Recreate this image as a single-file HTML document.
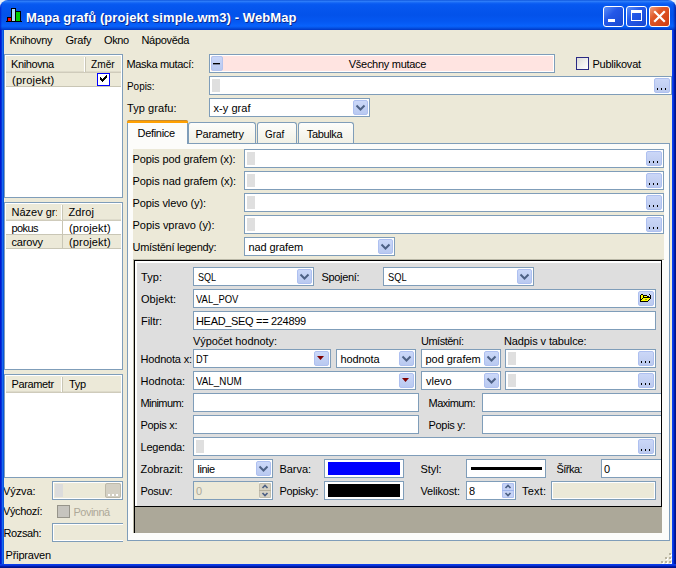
<!DOCTYPE html>
<html><head><meta charset="utf-8">
<style>
*{box-sizing:border-box;margin:0;padding:0}
html,body{width:676px;height:568px;overflow:hidden;background:#ECE9D8}
body{font-family:"Liberation Sans",sans-serif;font-size:11px;color:#000;position:relative}
.a{position:absolute}
.t{position:absolute;white-space:nowrap;line-height:13px;height:13px}
.f{position:absolute;background:#fff;border:1px solid #7F9DB9;overflow:hidden}
.ft{position:absolute;top:3px;white-space:nowrap;line-height:13px;height:13px}
.grip{position:absolute;left:2px;top:2px;width:8px;height:13px;background:#DFDFDF}
.dots{position:absolute;right:1px;top:1px;width:16px;height:15px;background:linear-gradient(#CBD7F7,#BCCAEE);border:1px solid #AEC0F0;border-radius:2px}
.dots i{position:absolute;top:9px;width:1px;height:2px;background:#000}
.dots.dis{background:#D4D0C4;border-color:#BDB9A9}
.dots.dis i{background:#fff;width:2px;top:10px}
.drop{position:absolute;right:1px;top:1px;width:15px;height:15px;background:linear-gradient(#CBD8F9,#B9C9F0);border:1px solid #AEC0F0;border-radius:2px}
.drop svg{position:absolute;left:-1px;top:-1px}
.lb{position:absolute;background:#fff;border:1px solid #7F9DB9;overflow:hidden}
.hd{position:absolute;left:1px;top:1px;right:1px;height:17px;background:#ECE9D8;border-bottom:1px solid #CFCBBB;box-shadow:inset 0 -1px 0 #DEDBCB}
.vs{position:absolute;width:1px;background:#C9C6B5}
.row{position:absolute;left:1px;right:1px;height:14px;border-bottom:1px solid #C9C6B5}
.tab{position:absolute;top:122px;height:21px;background:linear-gradient(#FDFDFB,#F1F0E6);border:1px solid #7F9DB9;border-bottom:none;border-radius:3px 3px 0 0}
</style></head><body>

<div class="a" style="left:0;top:0;width:676px;height:568px;background:#0A2CD4"></div>
<div class="a" style="left:4px;top:30px;width:668px;height:534px;background:#ECE9D8"></div>
<div class="a" style="left:0;top:0;width:676px;height:8px;background:#E8EEF8"></div>
<div class="a" style="left:0;top:0;width:676px;height:30px;background:linear-gradient(#0A50D8 0,#3080FA 4%,#1062F4 10%,#0658F0 16%,#0352EA 50%,#0558F2 72%,#0862FC 87%,#0552E4 93%,#0036C4 100%);border-radius:8px 8px 0 0"></div>
<div class="a" style="left:0;top:0;width:676px;height:30px;border-radius:8px 8px 0 0;overflow:hidden"><div class="a" style="right:0;top:0;width:3px;height:30px;background:linear-gradient(90deg,rgba(0,30,170,0),rgba(0,25,150,.85))"></div><div class="a" style="left:0;top:0;width:2px;height:30px;background:linear-gradient(90deg,rgba(0,25,200,.8),rgba(0,25,200,0))"></div></div>
<svg class="a" style="left:6px;top:7px" width="16" height="16" viewBox="0 0 16 16">
<rect x="1" y="10" width="5" height="5" fill="#000"/><rect x="2" y="11" width="3" height="3" fill="#F00"/>
<rect x="5" y="1" width="5" height="14" fill="#000"/><rect x="6" y="2" width="3" height="12" fill="#A8D8F8"/>
<rect x="9" y="4" width="6" height="11" fill="#000"/><rect x="10" y="5" width="4" height="9" fill="#0C0"/>
<rect x="0" y="14" width="16" height="1" fill="#000"/></svg>
<div id="t0" class="t" style="left:26.00px;top:10px;letter-spacing:0.088px;font-size:13px;font-weight:bold;color:#fff;line-height:15px;height:15px;text-shadow:1px 1px 0 #0A2A90">Mapa grafů (projekt simple.wm3) - WebMap</div>
<div class="a" style="left:603px;top:6px;width:21px;height:21px;border:1px solid #fff;border-radius:3px;background:linear-gradient(135deg,#5C90F8,#2458E8 40%,#1848D0)">
<div class="a" style="left:4px;top:12px;width:7px;height:3px;background:#fff"></div>
</div>
<div class="a" style="left:626px;top:6px;width:21px;height:21px;border:1px solid #fff;border-radius:3px;background:linear-gradient(135deg,#5C90F8,#2458E8 40%,#1848D0)">
<div class="a" style="left:4px;top:3px;width:11px;height:11px;border:1px solid #fff;border-top-width:3px"></div>
</div>
<div class="a" style="left:649px;top:6px;width:21px;height:21px;border:1px solid #fff;border-radius:3px;background:linear-gradient(135deg,#F0A080,#E05828 35%,#D03C10)">
<svg class="a" style="left:0;top:0" width="19" height="19"><path d="M5 5 L14 14 M14 5 L5 14" stroke="#fff" stroke-width="2.2" stroke-linecap="square"/></svg>
</div>
<div id="t1" class="t" style="left:9.50px;top:34px;letter-spacing:-0.322px;">Knihovny</div>
<div id="t2" class="t" style="left:65.50px;top:34px;letter-spacing:-0.223px;">Grafy</div>
<div id="t3" class="t" style="left:104.00px;top:34px;letter-spacing:-0.391px;">Okno</div>
<div id="t4" class="t" style="left:141.50px;top:34px;letter-spacing:-0.319px;">Nápověda</div>
<div class="lb" style="left:4px;top:54px;width:119px;height:144px">
<div class="hd"></div>
<div class="vs" style="left:80px;top:2px;height:15px"></div>
<div class="vs" style="left:79px;top:2px;height:15px;background:#fff"></div>
<div class="a" style="left:0;top:0;width:75px;height:18px;overflow:hidden">
<div id="t5" class="t" style="left:6.00px;top:3px;letter-spacing:-0.393px;">Knihovna</div>
</div>
<div class="a" style="left:0;top:0;width:116px;height:18px;overflow:hidden">
<div id="t6" class="t" style="left:86.00px;top:3px;transform:scaleX(0.9231);transform-origin:0 0;">Změr</div>
</div>
<div class="row" style="top:18px;background:#ECE9D8">
<div id="t7" class="t" style="left:6.00px;top:1px;letter-spacing:0.228px;">(projekt)</div>
</div>
</div>
<div class="a" style="left:97px;top:73px;width:13px;height:13px;border:1px solid #0000FF;background:#fff"><svg class="a" style="left:0;top:0" width="11" height="11" shape-rendering="crispEdges" fill="#000"><rect x="2" y="3" width="1" height="3"/><rect x="3" y="4" width="1" height="3"/><rect x="4" y="5" width="1" height="3"/><rect x="5" y="4" width="1" height="3"/><rect x="6" y="3" width="1" height="3"/><rect x="7" y="2" width="1" height="3"/><rect x="8" y="1" width="1" height="3"/></svg></div>
<div class="lb" style="left:4px;top:202px;width:119px;height:168px">
<div class="hd"></div>
<div class="vs" style="left:57px;top:2px;height:15px"></div>
<div class="vs" style="left:56px;top:2px;height:15px;background:#fff"></div>
<div class="a" style="left:0;top:0;width:52px;height:18px;overflow:hidden">
<div id="t8" class="t" style="left:6.50px;top:3px;">Název gr:</div>
</div>
<div class="a" style="left:0;top:0;width:116px;height:18px;overflow:hidden">
<div id="t9" class="t" style="left:63.50px;top:3px;letter-spacing:0.096px;">Zdroj</div>
</div>
<div class="row" style="top:18px;background:#fff">
<div class="vs" style="left:56px;top:0;height:13px"></div>
<div id="t10" class="t" style="left:5.50px;top:1px;letter-spacing:-0.588px;">pokus</div>
<div id="t11" class="t" style="left:63.00px;top:1px;letter-spacing:0.165px;">(projekt)</div>
</div>
<div class="row" style="top:32px;background:#ECE9D8">
<div class="vs" style="left:56px;top:0;height:13px"></div>
<div id="t12" class="t" style="left:5.50px;top:1px;letter-spacing:-0.180px;">carovy</div>
<div id="t13" class="t" style="left:63.00px;top:1px;letter-spacing:0.165px;">(projekt)</div>
</div>
</div>
<div class="lb" style="left:4px;top:374px;width:119px;height:104px">
<div class="hd"></div>
<div class="vs" style="left:57px;top:2px;height:15px"></div>
<div class="vs" style="left:56px;top:2px;height:15px;background:#fff"></div>
<div class="a" style="left:0;top:0;width:52px;height:18px;overflow:hidden">
<div id="t14" class="t" style="left:6.50px;top:3px;letter-spacing:-0.367px;">Parametr</div>
</div>
<div class="a" style="left:0;top:0;width:116px;height:18px;overflow:hidden">
<div id="t15" class="t" style="left:64.00px;top:3px;letter-spacing:-0.306px;">Typ</div>
</div>
</div>
<div id="t16" class="t" style="left:3.00px;top:485px;letter-spacing:-0.091px;">Výzva:</div>
<div class="f" style="left:52px;top:481px;width:71px;height:19px;background:#ECE9D8;box-shadow:inset 0 0 0 1px #fff"><div class="grip" style="background:#DCDCDC"></div><div class="dots dis"><i style="left:2px"></i><i style="left:6px"></i><i style="left:10px"></i></div></div>
<div id="t17" class="t" style="left:3.00px;top:505px;letter-spacing:-0.375px;">Výchozí:</div>
<div class="a" style="left:57px;top:505px;width:13px;height:13px;border:1px solid #96948A;background:#C6C4BE"></div>
<div id="t18" class="t" style="left:73.50px;top:506px;letter-spacing:-0.522px;color:#ACA899">Povinná</div>
<div id="t19" class="t" style="left:3.50px;top:527px;letter-spacing:-0.383px;">Rozsah:</div>
<div class="f" style="left:52px;top:523px;width:71px;height:19px;background:#ECE9D8;border-right:none;box-shadow:inset 0 1px 0 #fff,inset 1px 0 0 #fff,inset 0 -1px 0 #fff"></div>
<div id="t20" class="t" style="left:5.50px;top:549px;letter-spacing:-0.182px;">Připraven</div>
<svg class="a" style="left:661px;top:553px" width="12" height="12"><g fill="#fff" transform="translate(1,1)"><rect x="8" y="0" width="2" height="2"/><rect x="4" y="4" width="2" height="2"/><rect x="8" y="4" width="2" height="2"/><rect x="0" y="8" width="2" height="2"/><rect x="4" y="8" width="2" height="2"/><rect x="8" y="8" width="2" height="2"/></g><g fill="#B8B4A0"><rect x="8" y="0" width="2" height="2"/><rect x="4" y="4" width="2" height="2"/><rect x="8" y="4" width="2" height="2"/><rect x="0" y="8" width="2" height="2"/><rect x="4" y="8" width="2" height="2"/><rect x="8" y="8" width="2" height="2"/></g></svg>
<div id="t21" class="t" style="left:126.50px;top:58px;letter-spacing:-0.330px;">Maska mutací:</div>
<div class="f" style="left:209px;top:54px;width:346px;height:19px;background:#FFE4E1;box-shadow:inset 0 0 0 1px #fff"><div class="a" style="left:1px;top:1px;width:12px;height:15px;background:linear-gradient(#C9D6F8,#B9C9F0);border:1px solid #B3C3EE;border-radius:2px"><div class="a" style="left:1px;top:6px;width:7px;height:1px;background:#000;box-shadow:0 1px 0 rgba(0,0,0,.35)"></div></div><div id="t22" class="ft" style="left:138.80px;letter-spacing:-0.285px;">Všechny mutace</div></div>
<div class="a" style="left:576px;top:57px;width:13px;height:13px;border:1px solid #2A2A84;background:linear-gradient(135deg,#DCDCD8,#fff)"></div>
<div id="t23" class="t" style="left:592.50px;top:58px;letter-spacing:-0.244px;">Publikovat</div>
<div id="t24" class="t" style="left:126.50px;top:80px;transform:scaleX(0.9012);transform-origin:0 0;">Popis:</div>
<div class="f" style="left:209px;top:76px;width:463px;height:19px;"><div class="grip"></div><div class="dots"><i style="left:2px"></i><i style="left:6px"></i><i style="left:10px"></i></div></div>
<div id="t25" class="t" style="left:127.00px;top:102px;letter-spacing:0.071px;">Typ grafu:</div>
<div class="f" style="left:209px;top:98px;width:161px;height:19px;"><div id="t26" class="ft" style="left:3.50px;letter-spacing:0.055px;">x-y graf</div><div class="drop"><svg width="15" height="15" viewBox="0 0 15 15"><path d="M3.5 5.5 L7.5 9.5 L11.5 5.5" fill="none" stroke="#4D6185" stroke-width="2"/></svg></div></div>
<div class="a" style="left:127px;top:143px;width:543px;height:398px;border:1px solid #7F9DB9;background:#FCFCFA"></div>
<div class="a" style="left:133px;top:149px;width:531px;height:110px;background:#ECE9D8"></div>
<div class="tab" style="left:188px;width:68px"></div>
<div id="t27" class="t" style="left:195.50px;top:128px;letter-spacing:-0.279px;">Parametry</div>
<div class="tab" style="left:257px;width:40px"></div>
<div id="t28" class="t" style="left:265.40px;top:128px;transform:scaleX(0.8999);transform-origin:0 0;">Graf</div>
<div class="tab" style="left:298px;width:56px"></div>
<div id="t29" class="t" style="left:306.80px;top:128px;letter-spacing:-0.349px;">Tabulka</div>
<div class="a" style="left:127px;top:120px;width:61px;height:24px;background:#FCFCFA;border:1px solid #7F9DB9;border-bottom:none;border-top:none;border-radius:3px 3px 0 0"></div>
<div class="a" style="left:127px;top:120px;width:61px;height:3px;background:#FFA000;border-top:1px solid #C88C30;border-radius:2px 2px 0 0"></div>
<div id="t30" class="t" style="left:137.50px;top:127px;letter-spacing:-0.303px;">Definice</div>
<div id="t31" class="t" style="left:132.50px;top:153px;letter-spacing:-0.105px;">Popis pod grafem (x):</div>
<div class="f" style="left:244px;top:149px;width:420px;height:19px;"><div class="grip"></div><div class="dots"><i style="left:2px"></i><i style="left:6px"></i><i style="left:10px"></i></div></div>
<div id="t32" class="t" style="left:132.50px;top:175px;letter-spacing:-0.080px;">Popis nad grafem (x):</div>
<div class="f" style="left:244px;top:171px;width:420px;height:19px;"><div class="grip"></div><div class="dots"><i style="left:2px"></i><i style="left:6px"></i><i style="left:10px"></i></div></div>
<div id="t33" class="t" style="left:132.50px;top:197px;letter-spacing:-0.109px;">Popis vlevo (y):</div>
<div class="f" style="left:244px;top:193px;width:420px;height:19px;"><div class="grip"></div><div class="dots"><i style="left:2px"></i><i style="left:6px"></i><i style="left:10px"></i></div></div>
<div id="t34" class="t" style="left:132.50px;top:219px;letter-spacing:-0.029px;">Popis vpravo (y):</div>
<div class="f" style="left:244px;top:215px;width:420px;height:19px;"><div class="grip"></div><div class="dots"><i style="left:2px"></i><i style="left:6px"></i><i style="left:10px"></i></div></div>
<div id="t35" class="t" style="left:132.50px;top:241px;letter-spacing:-0.287px;">Umístění legendy:</div>
<div class="f" style="left:244px;top:237px;width:151px;height:19px;"><div id="t36" class="ft" style="left:3.50px;letter-spacing:-0.109px;">nad grafem</div><div class="drop"><svg width="15" height="15" viewBox="0 0 15 15"><path d="M3.5 5.5 L7.5 9.5 L11.5 5.5" fill="none" stroke="#4D6185" stroke-width="2"/></svg></div></div>
<div class="a" style="left:133px;top:259px;width:531px;height:274px;background:#FCFCFA;border-left:1px solid #B9B7A6;border-top:1px solid #B9B7A6"></div>
<div class="a" style="left:134px;top:260px;width:528px;height:273px;background:#ACA899;border-left:1px solid #000"></div>
<div class="a" id="ip" style="left:134px;top:260px;width:528px;height:247px;background:#DEDEDE;border:1px solid #000;overflow:hidden;box-shadow:inset 2px 2px 0 #fff">
<div id="t37" class="t" style="left:6.00px;top:10px;letter-spacing:0.090px;">Typ:</div>
<div class="f" style="left:58px;top:6px;width:121px;height:19px;"><div id="t38" class="ft" style="left:4.00px;transform:scaleX(0.8222);transform-origin:0 0;">SQL</div><div class="drop"><svg width="15" height="15" viewBox="0 0 15 15"><path d="M3.5 5.5 L7.5 9.5 L11.5 5.5" fill="none" stroke="#4D6185" stroke-width="2"/></svg></div></div>
<div id="t39" class="t" style="left:186.50px;top:10px;letter-spacing:-0.330px;">Spojení:</div>
<div class="f" style="left:248px;top:6px;width:151px;height:19px;"><div id="t40" class="ft" style="left:3.50px;transform:scaleX(0.8450);transform-origin:0 0;">SQL</div><div class="drop"><svg width="15" height="15" viewBox="0 0 15 15"><path d="M3.5 5.5 L7.5 9.5 L11.5 5.5" fill="none" stroke="#4D6185" stroke-width="2"/></svg></div></div>
<div id="t41" class="t" style="left:6.00px;top:32px;letter-spacing:0.035px;">Objekt:</div>
<div class="f" style="left:58px;top:28px;width:463px;height:19px;"><div id="t42" class="ft" style="left:2.00px;transform:scaleX(0.8602);transform-origin:0 0;">VAL_POV</div><div class="dots"><svg class="a" style="left:1px;top:2px" width="12" height="8" shape-rendering="crispEdges"><rect x="1" y="0" width="1" height="1" fill="#000"/><rect x="2" y="0" width="1" height="1" fill="#000"/><rect x="9" y="0" width="1" height="1" fill="#000"/><rect x="0" y="1" width="1" height="1" fill="#000"/><rect x="3" y="1" width="1" height="1" fill="#000"/><rect x="4" y="1" width="1" height="1" fill="#000"/><rect x="5" y="1" width="1" height="1" fill="#000"/><rect x="6" y="1" width="1" height="1" fill="#000"/><rect x="10" y="1" width="1" height="1" fill="#000"/><rect x="0" y="2" width="1" height="1" fill="#000"/><rect x="3" y="2" width="1" height="1" fill="#000"/><rect x="7" y="2" width="1" height="1" fill="#000"/><rect x="8" y="2" width="1" height="1" fill="#000"/><rect x="10" y="2" width="1" height="1" fill="#000"/><rect x="0" y="3" width="1" height="1" fill="#000"/><rect x="3" y="3" width="1" height="1" fill="#000"/><rect x="4" y="3" width="1" height="1" fill="#000"/><rect x="5" y="3" width="1" height="1" fill="#000"/><rect x="6" y="3" width="1" height="1" fill="#000"/><rect x="7" y="3" width="1" height="1" fill="#000"/><rect x="8" y="3" width="1" height="1" fill="#000"/><rect x="9" y="3" width="1" height="1" fill="#000"/><rect x="10" y="3" width="1" height="1" fill="#000"/><rect x="0" y="4" width="1" height="1" fill="#000"/><rect x="2" y="4" width="1" height="1" fill="#000"/><rect x="10" y="4" width="1" height="1" fill="#000"/><rect x="0" y="5" width="1" height="1" fill="#000"/><rect x="1" y="5" width="1" height="1" fill="#000"/><rect x="9" y="5" width="1" height="1" fill="#000"/><rect x="0" y="6" width="1" height="1" fill="#000"/><rect x="8" y="6" width="1" height="1" fill="#000"/><rect x="0" y="7" width="1" height="1" fill="#000"/><rect x="1" y="7" width="1" height="1" fill="#000"/><rect x="2" y="7" width="1" height="1" fill="#000"/><rect x="3" y="7" width="1" height="1" fill="#000"/><rect x="4" y="7" width="1" height="1" fill="#000"/><rect x="5" y="7" width="1" height="1" fill="#000"/><rect x="6" y="7" width="1" height="1" fill="#000"/><rect x="7" y="7" width="1" height="1" fill="#000"/><rect x="1" y="1" width="1" height="1" fill="#FFFF00"/><rect x="2" y="1" width="1" height="1" fill="#FFFF00"/><rect x="1" y="2" width="1" height="1" fill="#FFFF00"/><rect x="2" y="2" width="1" height="1" fill="#FFFF00"/><rect x="4" y="2" width="1" height="1" fill="#FFFF00"/><rect x="5" y="2" width="1" height="1" fill="#FFFF00"/><rect x="6" y="2" width="1" height="1" fill="#FFFF00"/><rect x="1" y="3" width="1" height="1" fill="#FFFF00"/><rect x="2" y="3" width="1" height="1" fill="#FFFF00"/><rect x="1" y="4" width="1" height="1" fill="#FFFF00"/><rect x="3" y="4" width="1" height="1" fill="#FFFF00"/><rect x="4" y="4" width="1" height="1" fill="#FFFF00"/><rect x="5" y="4" width="1" height="1" fill="#FFFF00"/><rect x="6" y="4" width="1" height="1" fill="#FFFF00"/><rect x="7" y="4" width="1" height="1" fill="#FFFF00"/><rect x="8" y="4" width="1" height="1" fill="#FFFF00"/><rect x="9" y="4" width="1" height="1" fill="#FFFF00"/><rect x="2" y="5" width="1" height="1" fill="#FFFF00"/><rect x="3" y="5" width="1" height="1" fill="#FFFF00"/><rect x="4" y="5" width="1" height="1" fill="#FFFF00"/><rect x="7" y="5" width="1" height="1" fill="#FFFF00"/><rect x="8" y="5" width="1" height="1" fill="#FFFF00"/><rect x="1" y="6" width="1" height="1" fill="#FFFF00"/><rect x="2" y="6" width="1" height="1" fill="#FFFF00"/><rect x="3" y="6" width="1" height="1" fill="#FFFF00"/><rect x="4" y="6" width="1" height="1" fill="#FFFF00"/><rect x="5" y="6" width="1" height="1" fill="#FFFF00"/><rect x="6" y="6" width="1" height="1" fill="#FFFF00"/><rect x="7" y="6" width="1" height="1" fill="#FFFF00"/><rect x="5" y="5" width="1" height="1" fill="#A0A000"/><rect x="6" y="5" width="1" height="1" fill="#A0A000"/></svg></div></div>
<div id="t43" class="t" style="left:6.00px;top:54px;letter-spacing:-0.065px;">Filtr:</div>
<div class="f" style="left:58px;top:50px;width:463px;height:19px;"><div id="t44" class="ft" style="left:2.00px;letter-spacing:-0.321px;">HEAD_SEQ == 224899</div></div>
<div id="t45" class="t" style="left:58.00px;top:74px;letter-spacing:-0.063px;">Výpočet hodnoty:</div>
<div id="t46" class="t" style="left:286.00px;top:74px;letter-spacing:-0.501px;">Umístění:</div>
<div id="t47" class="t" style="left:369.00px;top:74px;letter-spacing:-0.108px;">Nadpis v tabulce:</div>
<div id="t48" class="t" style="left:5.50px;top:92px;letter-spacing:-0.183px;">Hodnota x:</div>
<div class="f" style="left:58px;top:88px;width:138px;height:19px;"><div id="t49" class="ft" style="left:2.00px;transform:scaleX(0.8365);transform-origin:0 0;">DT</div><div class="drop"><svg width="15" height="15" viewBox="0 0 15 15"><path d="M3 5 H10 L6.5 9 Z" fill="#800000"/></svg></div></div>
<div class="f" style="left:201px;top:88px;width:80px;height:19px;"><div id="t50" class="ft" style="left:3.50px;letter-spacing:-0.107px;">hodnota</div><div class="drop"><svg width="15" height="15" viewBox="0 0 15 15"><path d="M3.5 5.5 L7.5 9.5 L11.5 5.5" fill="none" stroke="#4D6185" stroke-width="2"/></svg></div></div>
<div class="f" style="left:286px;top:88px;width:80px;height:19px;"><div id="t51" class="ft" style="left:3.50px;letter-spacing:-0.053px;">pod grafem</div><div class="drop"><svg width="15" height="15" viewBox="0 0 15 15"><path d="M3.5 5.5 L7.5 9.5 L11.5 5.5" fill="none" stroke="#4D6185" stroke-width="2"/></svg></div></div>
<div class="f" style="left:370px;top:88px;width:151px;height:19px;"><div class="grip"></div><div class="dots"><i style="left:2px"></i><i style="left:6px"></i><i style="left:10px"></i></div></div>
<div id="t52" class="t" style="left:5.50px;top:114px;letter-spacing:-0.013px;">Hodnota:</div>
<div class="f" style="left:58px;top:110px;width:223px;height:19px;"><div id="t53" class="ft" style="left:2.00px;transform:scaleX(0.8925);transform-origin:0 0;">VAL_NUM</div><div class="drop"><svg width="15" height="15" viewBox="0 0 15 15"><path d="M3 5 H10 L6.5 9 Z" fill="#800000"/></svg></div></div>
<div class="f" style="left:286px;top:110px;width:80px;height:19px;"><div id="t54" class="ft" style="left:4.00px;letter-spacing:-0.015px;">vlevo</div><div class="drop"><svg width="15" height="15" viewBox="0 0 15 15"><path d="M3.5 5.5 L7.5 9.5 L11.5 5.5" fill="none" stroke="#4D6185" stroke-width="2"/></svg></div></div>
<div class="f" style="left:370px;top:110px;width:151px;height:19px;"><div class="grip"></div><div class="dots"><i style="left:2px"></i><i style="left:6px"></i><i style="left:10px"></i></div></div>
<div id="t55" class="t" style="left:5.50px;top:136px;letter-spacing:-0.587px;">Minimum:</div>
<div class="f" style="left:58px;top:132px;width:226px;height:19px;"></div>
<div id="t56" class="t" style="left:293.50px;top:136px;letter-spacing:-0.524px;">Maximum:</div>
<div class="f" style="left:347px;top:132px;width:190px;height:19px;"></div>
<div id="t57" class="t" style="left:5.50px;top:158px;letter-spacing:-0.296px;">Popis x:</div>
<div class="f" style="left:58px;top:154px;width:226px;height:19px;"></div>
<div id="t58" class="t" style="left:293.50px;top:158px;letter-spacing:-0.296px;">Popis y:</div>
<div class="f" style="left:347px;top:154px;width:190px;height:19px;"></div>
<div id="t59" class="t" style="left:5.50px;top:180px;letter-spacing:-0.189px;">Legenda:</div>
<div class="f" style="left:58px;top:176px;width:463px;height:19px;"><div class="grip"></div><div class="dots"><i style="left:2px"></i><i style="left:6px"></i><i style="left:10px"></i></div></div>
<div id="t60" class="t" style="left:5.50px;top:202px;letter-spacing:-0.029px;">Zobrazit:</div>
<div class="f" style="left:58px;top:198px;width:80px;height:19px;"><div id="t61" class="ft" style="left:3.50px;letter-spacing:-0.487px;">linie</div><div class="drop"><svg width="15" height="15" viewBox="0 0 15 15"><path d="M3.5 5.5 L7.5 9.5 L11.5 5.5" fill="none" stroke="#4D6185" stroke-width="2"/></svg></div></div>
<div id="t62" class="t" style="left:144.50px;top:202px;letter-spacing:-0.047px;">Barva:</div>
<div class="f" style="left:189px;top:198px;width:80px;height:19px;"><div class="a" style="left:3px;top:2px;right:3px;bottom:2px;background:#0000FF"></div></div>
<div id="t63" class="t" style="left:285.50px;top:202px;letter-spacing:-0.084px;">Styl:</div>
<div class="f" style="left:331px;top:198px;width:80px;height:19px;"><div class="a" style="left:4px;top:7px;right:3px;height:3px;background:#000"></div></div>
<div id="t64" class="t" style="left:421.50px;top:202px;letter-spacing:-0.535px;">Šířka:</div>
<div class="f" style="left:466px;top:198px;width:70px;height:19px;"><div id="t65" class="ft" style="left:2.00px;">0</div></div>
<div id="t66" class="t" style="left:5.50px;top:224px;letter-spacing:-0.314px;">Posuv:</div>
<div class="f" style="left:58px;top:220px;width:80px;height:19px;background:#ECE9D8"><div id="t67" class="ft" style="left:2.00px;color:#ACA899">0</div><div class="a" style="right:0;top:0;width:13px;height:17px;background:#fff"></div><div class="a" style="right:1px;top:1px;width:12px;height:15px;background:#B4B09E;border-radius:2px"><div class="a" style="left:0;top:0;width:12px;height:7px;background:#D6D2C4;border:1px solid #C2BEAE;border-bottom:none;border-radius:2px 2px 0 0"><svg class="a" style="left:-1px;top:-1px" width="12" height="7"><path d="M3.5 5 L6 2.5 L8.5 5" fill="none" stroke="#4D6185" stroke-width="1.7"/></svg></div><div class="a" style="left:0;top:8px;width:12px;height:7px;background:#D6D2C4;border:1px solid #C2BEAE;border-top:none;border-radius:0 0 2px 2px"><svg class="a" style="left:-1px;top:0" width="12" height="7"><path d="M3.5 2 L6 4.5 L8.5 2" fill="none" stroke="#4D6185" stroke-width="1.7"/></svg></div></div></div>
<div id="t68" class="t" style="left:144.50px;top:224px;letter-spacing:-0.359px;">Popisky:</div>
<div class="f" style="left:189px;top:220px;width:80px;height:19px;"><div class="a" style="left:3px;top:2px;right:3px;bottom:2px;background:#000"></div></div>
<div id="t69" class="t" style="left:285.50px;top:224px;letter-spacing:-0.176px;">Velikost:</div>
<div class="f" style="left:331px;top:220px;width:50px;height:19px;"><div id="t70" class="ft" style="left:2.00px;">8</div><div class="a" style="right:0;top:0;width:13px;height:17px;background:#fff"></div><div class="a" style="right:1px;top:1px;width:12px;height:15px;background:#9DB4EC;border-radius:2px"><div class="a" style="left:0;top:0;width:12px;height:7px;background:#C6D3F6;border:1px solid #AEC0F0;border-bottom:none;border-radius:2px 2px 0 0"><svg class="a" style="left:-1px;top:-1px" width="12" height="7"><path d="M3.5 5 L6 2.5 L8.5 5" fill="none" stroke="#4D6185" stroke-width="1.7"/></svg></div><div class="a" style="left:0;top:8px;width:12px;height:7px;background:#C6D3F6;border:1px solid #AEC0F0;border-top:none;border-radius:0 0 2px 2px"><svg class="a" style="left:-1px;top:0" width="12" height="7"><path d="M3.5 2 L6 4.5 L8.5 2" fill="none" stroke="#4D6185" stroke-width="1.7"/></svg></div></div></div>
<div id="t71" class="t" style="left:387.00px;top:224px;letter-spacing:0.207px;">Text:</div>
<div class="f" style="left:416px;top:220px;width:105px;height:19px;background:#ECE9D8;box-shadow:inset 0 0 0 1px #fff"></div>
</div>
<div class="a" style="left:0;top:30px;width:4px;height:538px;background:linear-gradient(90deg,#0019CF 0,#0019CF 25%,#0831D9 25%,#0831D9 50%,#166AEE 50%,#166AEE 75%,#0855DD 75%)"></div>
<div class="a" style="left:672px;top:30px;width:4px;height:538px;background:linear-gradient(90deg,#0A40F0 0,#0A40F0 25%,#0831D9 25%,#0831D9 50%,#001CA8 50%,#001CA8 75%,#00138C 75%)"></div>
<div class="a" style="left:0;top:564px;width:676px;height:4px;background:linear-gradient(#0A3CE8 0,#0A3CE8 25%,#0831D9 25%,#0831D9 50%,#001CA8 50%,#001CA8 75%,#00138C 75%)"></div>
</body></html>
